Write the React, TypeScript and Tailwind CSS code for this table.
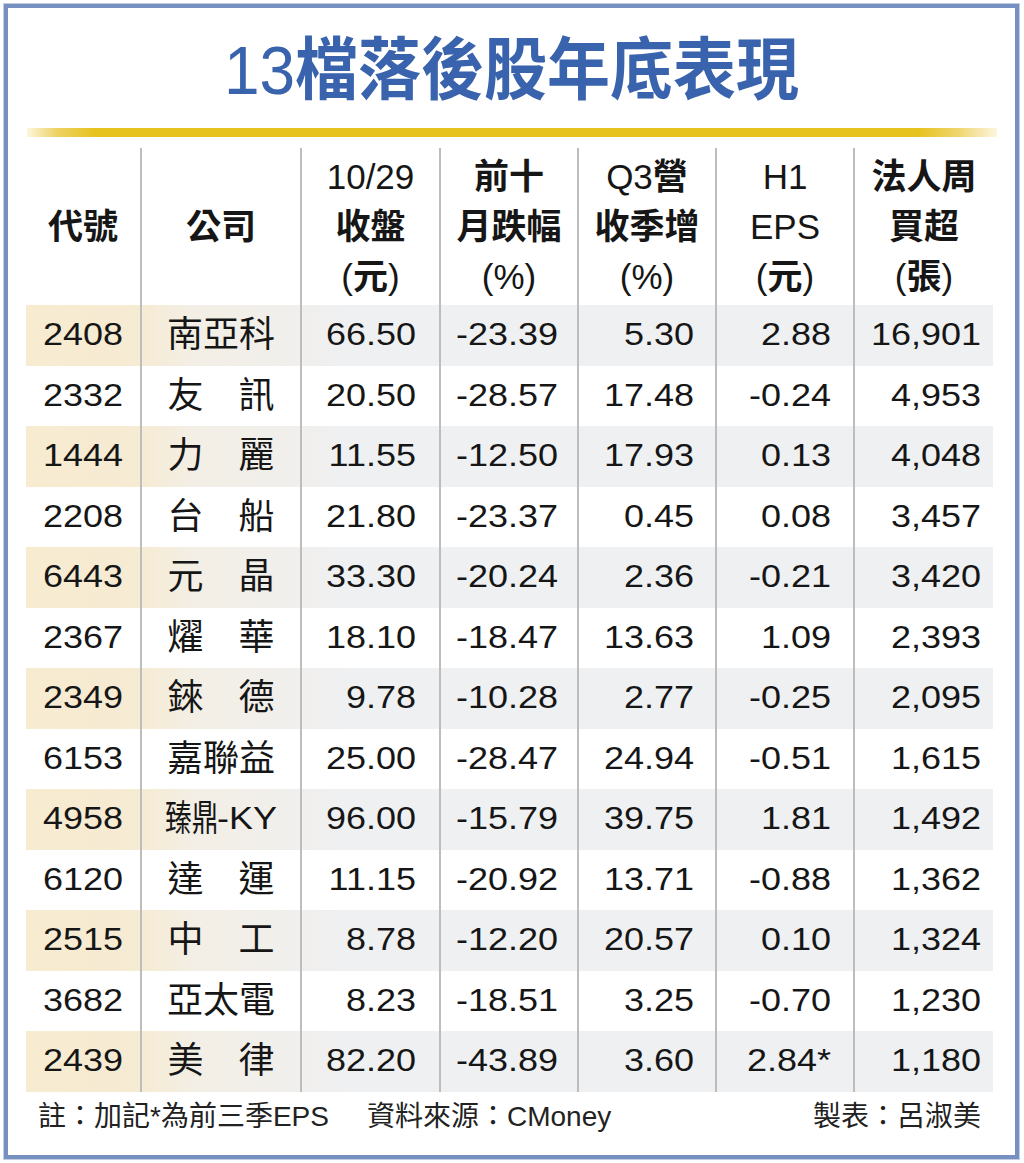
import React from "react";

type Row = [string, string, string, string, string, string, string];

const rows: Row[] = [
  ["2408", "南亞科", "66.50", "-23.39", "5.30", "2.88", "16,901"],
  ["2332", "友訊", "20.50", "-28.57", "17.48", "-0.24", "4,953"],
  ["1444", "力麗", "11.55", "-12.50", "17.93", "0.13", "4,048"],
  ["2208", "台船", "21.80", "-23.37", "0.45", "0.08", "3,457"],
  ["6443", "元晶", "33.30", "-20.24", "2.36", "-0.21", "3,420"],
  ["2367", "燿華", "18.10", "-18.47", "13.63", "1.09", "2,393"],
  ["2349", "錸德", "9.78", "-10.28", "2.77", "-0.25", "2,095"],
  ["6153", "嘉聯益", "25.00", "-28.47", "24.94", "-0.51", "1,615"],
  ["4958", "臻鼎-KY", "96.00", "-15.79", "39.75", "1.81", "1,492"],
  ["6120", "達運", "11.15", "-20.92", "13.71", "-0.88", "1,362"],
  ["2515", "中工", "8.78", "-12.20", "20.57", "0.10", "1,324"],
  ["3682", "亞太電", "8.23", "-18.51", "3.25", "-0.70", "1,230"],
  ["2439", "美律", "82.20", "-43.89", "3.60", "2.84*", "1,180"],
];

const GRID = "grid grid-cols-[114px_160px_139px_138px_138px_138px_140px]";
const DIV = "border-l-2 border-[#bdbdbd]";

function Num({ v }: { v: string }) {
  return <span className="inline-block scale-y-[0.87] text-[36px] leading-none">{v}</span>;
}

function Name({ n }: { n: string }) {
  if (n === "臻鼎-KY") {
    return (
      <span className="flex items-center whitespace-nowrap text-[36px] leading-none">
        <span className="inline-block w-[52px] overflow-visible">
          <span className="inline-block origin-left scale-x-[0.74] whitespace-nowrap">臻鼎</span>
        </span>
        <span className="inline-block scale-y-[0.87]">-KY</span>
      </span>
    );
  }
  if (n.length === 2) {
    return (
      <span className="flex w-[107px] justify-between text-[36px] leading-none">
        <span>{n[0]}</span>
        <span>{n[1]}</span>
      </span>
    );
  }
  return <span className="text-[36px] leading-none">{n}</span>;
}

function HeadCell({ lines, first }: { lines: React.ReactNode[]; first?: boolean }) {
  return (
    <div className={`flex flex-col items-center justify-center text-[35px] leading-[50px] ${first ? "" : DIV}`}>
      {lines.map((l, i) => (
        <div key={i} className="whitespace-nowrap">
          {l}
        </div>
      ))}
    </div>
  );
}

const B = ({ children }: { children: React.ReactNode }) => <span className="font-bold">{children}</span>;

export default function App() {
  return (
    <div className="w-[1024px] h-[1163px] bg-white pt-[4px] pl-[4px] text-[#161616] font-['Liberation_Sans','Noto_Sans_CJK_TC',sans-serif]">
      <div className="w-[1015px] h-[1155px] border-4 border-[#7690c1] shadow-[0_0_0_1px_#c3cde1] flex flex-col">
        {/* Title */}
        <div className="h-[112px] pt-[12px] flex items-center justify-center">
          <h1 className="scale-y-[1.08] text-[63px] leading-none font-bold text-[#3a63ad] whitespace-nowrap">
            <span className="font-normal text-[64px]">13</span>檔落後股年底表現
          </h1>
        </div>
        {/* Yellow rule */}
        <div className="mt-[8px] ml-[19px] mr-[18px] h-[9px] bg-[linear-gradient(90deg,#fdf6de_0%,#eed266_3%,#e7c31f_7%,#e7c31f_92%,#efd56e_96%,#fdf6de_100%)]" />
        {/* Table */}
        <div className="mt-[11px] ml-[18px] w-[967px]">
          <div className={`${GRID} h-[157px]`}>
            <HeadCell first lines={[<B>代號</B>]} />
            <HeadCell lines={[<B>公司</B>]} />
            <HeadCell lines={["10/29", <B>收盤</B>, <>(<B>元</B>)</>]} />
            <HeadCell lines={[<B>前十</B>, <B>月跌幅</B>, "(%)"]} />
            <HeadCell lines={[<>Q3<B>營</B></>, <B>收季增</B>, "(%)"]} />
            <HeadCell lines={["H1", "EPS", <>(<B>元</B>)</>]} />
            <HeadCell lines={[<B>法人周</B>, <B>買超</B>, <>(<B>張</B>)</>]} />
          </div>
          {rows.map((r, i) => (
            <div
              key={r[0]}
              className={`${GRID} h-[60.5px] ${
                i % 2 === 0
                  ? "bg-[linear-gradient(90deg,#f7ebd0_0px,#f6ebd3_114px,#f3efe6_170px,#f1efec_260px,#eff0f2_320px,#eff0f2_100%)]"
                  : "bg-white"
              }`}
            >
              <div className="flex items-center justify-center">
                <Num v={r[0]} />
              </div>
              <div className={`flex items-center justify-center ${DIV}`}>
                <Name n={r[1]} />
              </div>
              <div className={`flex items-center justify-end pr-[23px] ${DIV}`}>
                <Num v={r[2]} />
              </div>
              <div className={`flex items-center justify-end pr-[19px] ${DIV}`}>
                <Num v={r[3]} />
              </div>
              <div className={`flex items-center justify-end pr-[21px] ${DIV}`}>
                <Num v={r[4]} />
              </div>
              <div className={`flex items-center justify-end pr-[22px] ${DIV}`}>
                <Num v={r[5]} />
              </div>
              <div className={`flex items-center justify-end pr-[12px] ${DIV}`}>
                <Num v={r[6]} />
              </div>
            </div>
          ))}
          {/* Footer */}
          <div className="h-[50px] flex items-center justify-between px-[12px] text-[28px] leading-none text-[#222]">
            <div className="whitespace-nowrap">
              <span>註：加記*為前三季EPS</span>
              <span className="ml-[38px]">資料來源：CMoney</span>
            </div>
            <div className="whitespace-nowrap">製表：呂淑美</div>
          </div>
        </div>
      </div>
    </div>
  );
}
